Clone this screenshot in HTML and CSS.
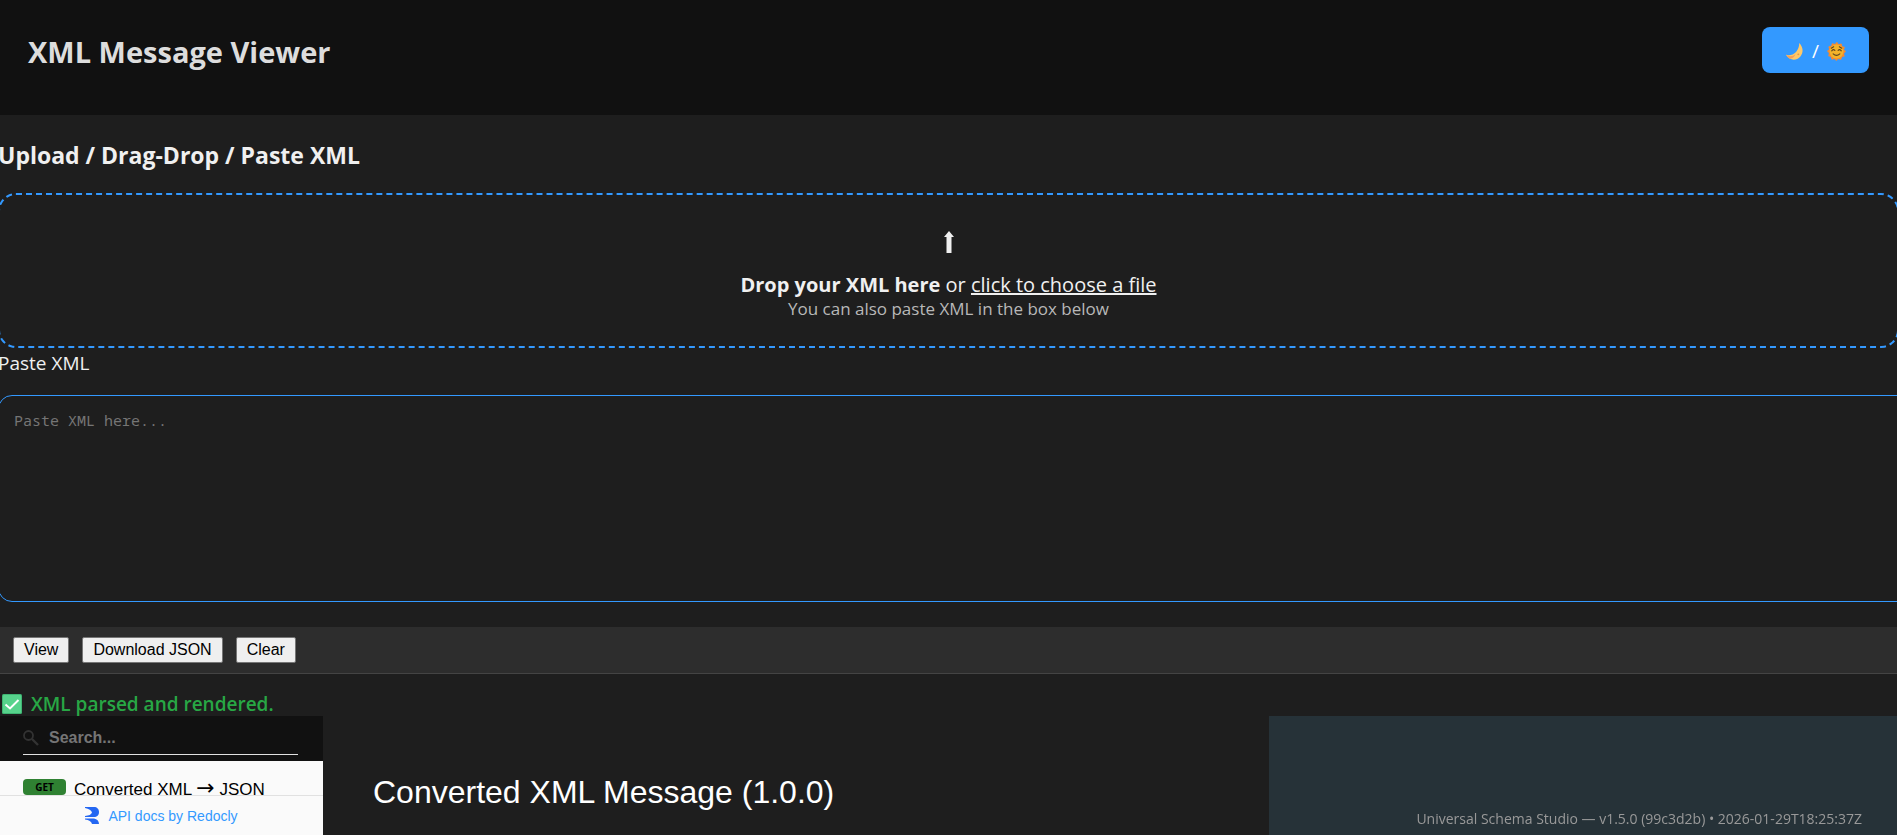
FILE: index.html
```html
<!DOCTYPE html>
<html lang="en">
<head>
    <meta charset="UTF-8">
    <meta name="viewport" content="width=device-width, initial-scale=1.0">
    <title>XML Message Viewer</title>
    <link rel="stylesheet" href="styles.css">
</head>
<body>

    <header class="app-header">
        <h1>XML Message Viewer</h1>
        <button type="button" class="theme-toggle" aria-label="Toggle theme">
            <svg class="emoji" viewBox="0 0 20 20" aria-hidden="true">
                <path d="M15 1C19 5 20 11 16 15.500C12 20 5 20 1 13.500C8 15.500 15 10 15 1Z" fill="#ffc868"/>
                <path d="M1 13.500C4 15.500 8 15.500 11 13C10 16 7 18 5 17.500Q2.500 16 1 13.500Z" fill="#f5a05c"/>
                <circle cx="14" cy="13" r="1" fill="#e89a4a"/>
            </svg>
            <span>/</span>
            <svg class="emoji" viewBox="0 0 20 20" aria-hidden="true">
                <circle cx="10" cy="10" r="8.500" fill="#f58a30"/>
                <circle cx="10" cy="10" r="8.500" fill="none" stroke="#f58a30" stroke-width="2.400" stroke-linecap="round" stroke-dasharray="0.100 4.350"/>
                <circle cx="10" cy="10" r="7.300" fill="#f3b32a"/>
                <path d="M4.500 6.500L7 5M15.500 6.500L13 5M5 9.300Q6.500 7 8.300 8.800M11.700 8.800Q13.500 7 15 9.300M6.500 12.500Q10 15.500 13.500 12.500" fill="none" stroke="#5c4420" stroke-width="1.200" stroke-linecap="round"/>
            </svg>
        </button>
    </header>

    <main>
        <h2>Upload / Drag-Drop / Paste XML</h2>

        <div class="dropzone">
            <svg class="upload-arrow" viewBox="0 0 10 22" aria-hidden="true">
                <path d="M5 0L10 6H7.500V22H2.500V6H0Z" fill="#f0f0f0"/>
            </svg>
            <p class="drop-text"><strong>Drop your XML here</strong> or <a href="#">click to choose a file</a></p>
            <p class="drop-hint">You can also paste XML in the box below</p>
        </div>

        <label for="xmlInput" class="paste-label">Paste XML</label>
        <textarea id="xmlInput" class="xml-input" placeholder="Paste XML here..."></textarea>

        <div class="toolbar">
            <button type="button">View</button>
            <button type="button">Download JSON</button>
            <button type="button">Clear</button>
        </div>

        <div class="status">
            <svg class="check" viewBox="0 0 20 20" aria-hidden="true">
                <rect width="20" height="20" rx="1.500" fill="#3fb573"/>
                <rect x="1" y="1" width="18" height="18" rx="1" fill="#57d38c"/>
                <path d="M3.500 10.500L8 14.500L16.500 6" fill="none" stroke="#fff" stroke-width="2"/>
            </svg>
            <span>XML parsed and rendered.</span>
        </div>

        <!-- Rendered API docs -->
        <section class="docs">
            <aside class="docs-menu">
                <div class="search">
                    <div class="search-box">
                        <svg class="search-icon" viewBox="0 0 16 16" aria-hidden="true">
                            <circle cx="5.500" cy="5.500" r="4.500" fill="none" stroke="#333" stroke-width="1.800"/>
                            <path d="M9 9L15 15" stroke="#333" stroke-width="2.400"/>
                        </svg>
                        <input type="text" placeholder="Search..." aria-label="Search">
                    </div>
                </div>
                <a href="#" class="menu-item">
                    <span class="method">GET</span>
                    <span>Converted XML <span class="arrow">→</span> JSON</span>
                </a>
                <a href="#" class="redocly">
                    <svg class="redocly-logo" viewBox="0 0 14 17" aria-hidden="true">
                        <path d="M0 0H9C12 0 14 2 14 5C14 8.500 12 10 9 10H0V9Q6 8.500 7 5.500Q6 2 0 1Z" fill="#2467f2"/>
                        <path d="M0 11.500H9C12 12 14 14 14 17H7Q6 13 0 12.500Z" fill="#2467f2"/>
                    </svg>
                    <span>API docs by Redocly</span>
                </a>
            </aside>
            <div class="docs-content">
                <h1>Converted XML Message (1.0.0)</h1>
            </div>
            <div class="docs-samples"></div>
        </section>
    </main>

    <footer class="version">Universal Schema Studio — v1.5.0 (99c3d2b) • 2026-01-29T18:25:37Z</footer>

</body>
</html>
```

FILE: styles.css
```css
* {
    box-sizing: border-box;
}

body {
    margin: 0;
    height: 100vh;
    display: flex;
    flex-direction: column;
    overflow: hidden;
    font-family: 'Segoe UI', 'Open Sans', sans-serif;
    font-size: 19px;
    background-color: #1e1e1e;
    color: #f0f0f0;
}

/* Header */
.app-header {
    display: flex;
    justify-content: space-between;
    align-items: flex-start;
    height: 115px;
    padding: 27px 28px;
    background-color: #111;
    color: #ddd;
}

.app-header h1 {
    margin: 0;
    font-size: 29px;
    line-height: 50px;
}

.theme-toggle {
    display: flex;
    align-items: center;
    gap: 8px;
    height: 46px;
    padding: 2px 23px 0;
    border: none;
    border-radius: 8px;
    background-color: #3399ff;
    color: #fff;
    font-family: inherit;
    font-size: 19px;
    cursor: pointer;
}

.emoji {
    width: 19px;
    height: 19px;
}

main {
    flex: 1;
    min-height: 0;
    display: flex;
    flex-direction: column;
}

h2 {
    margin: 24px 0 22px -2px;
    font-size: 23px;
    line-height: 32px;
}

/* Upload area */
.dropzone {
    height: 155px;
    margin: 0 -2px;
    padding-top: 36px;
    border: 2px dashed #3399ff;
    border-radius: 18px;
    text-align: center;
}

.upload-arrow {
    display: block;
    width: 10px;
    height: 22px;
    margin: 0 auto 20px;
}

.dropzone p {
    margin: 0;
    line-height: 24px;
}

.dropzone .drop-text {
    font-size: 20px;
}

.dropzone a {
    color: inherit;
    text-decoration-thickness: 2px;
}

.dropzone .drop-hint {
    font-size: 17px;
    color: #b8b8b8;
}

.paste-label {
    margin: 3px 0 19px -2px;
    line-height: 25px;
}

.xml-input {
    width: calc(100% + 24px);
    height: 207px;
    margin-left: -2px;
    padding: 13px 15px;
    border: 1px solid #3399ff;
    border-radius: 14px;
    background-color: #1e1e1e;
    color: #f0f0f0;
    font-family: Consolas, 'Noto Sans Mono', 'Liberation Mono', monospace;
    font-size: 15px;
    line-height: 22px;
    resize: none;
}

.xml-input::placeholder {
    color: #757575;
}

.toolbar {
    display: flex;
    gap: 13px;
    height: 47px;
    margin-top: 25px;
    padding: 10px 13px;
    background-color: #2d2d2d;
    border-bottom: 1px solid #444;
}

.toolbar button {
    height: 26px;
    padding: 0 10px;
    border: 1px solid #767676;
    border-radius: 2px;
    background-color: #efefef;
    color: #000;
    font-family: Arial, 'Liberation Sans', sans-serif;
    font-size: 16px;
}

.status {
    display: flex;
    align-items: center;
    gap: 9px;
    height: 24px;
    margin-top: 18px;
    padding-left: 2px;
    color: #28a745;
    font-weight: 600;
}

.check {
    width: 20px;
    height: 20px;
}

/* API docs */
.docs {
    flex: 1;
    min-height: 0;
    display: flex;
    font-family: Arial, 'Liberation Sans', sans-serif;
}

.docs-menu {
    display: flex;
    flex-direction: column;
    width: 323px;
    background-color: #fafafa;
}

.search {
    flex: none;
    height: 45px;
    padding: 6px 25px 0 23px;
    background-color: #111;
}

.search-box {
    display: flex;
    align-items: center;
    gap: 10px;
    height: 33px;
    border-bottom: 1px solid #e1e1e1;
}

.search-icon {
    flex: none;
    width: 16px;
    height: 16px;
}

.search-box input {
    width: 100%;
    padding: 0;
    border: none;
    outline: none;
    background: transparent;
    color: #ddd;
    font-family: Arial, 'Liberation Sans', sans-serif;
    font-size: 16px;
    font-weight: bold;
}

.search-box input::placeholder {
    color: #757575;
}

.menu-item {
    flex: 1;
    min-height: 0;
    display: flex;
    align-items: flex-start;
    gap: 8px;
    padding: 18px 23px 0;
    overflow: hidden;
    color: #000;
    font-size: 17px;
    line-height: 22px;
    text-decoration: none;
    white-space: nowrap;
}

.arrow {
    font-family: 'DejaVu Sans', sans-serif;
    font-size: 22px;
    line-height: 16px;
}

.method {
    width: 43px;
    height: 16px;
    border-radius: 4px;
    background-color: #2f8132;
    font-family: 'Open Sans', sans-serif;
    font-size: 10px;
    font-weight: bold;
    line-height: 16px;
    text-align: center;
}

.redocly {
    flex: none;
    display: flex;
    justify-content: center;
    align-items: center;
    gap: 9px;
    height: 40px;
    border-top: 1px solid #e1e1e1;
    color: #3399ff;
    font-size: 14px;
    text-decoration: none;
}

.redocly-logo {
    width: 14px;
    height: 17px;
}

.docs-content {
    flex: 1;
    padding: 56px 50px 0;
}

.docs-content h1 {
    margin: 0;
    color: #fff;
    font-size: 32px;
    font-weight: normal;
    line-height: 40px;
}

.docs-samples {
    width: 628px;
    background-color: #263238;
}

/* Build info stays pinned over the docs */
.version {
    position: fixed;
    right: 35px;
    bottom: 6px;
    color: #999;
    font-size: 14px;
    line-height: 20px;
}
```
